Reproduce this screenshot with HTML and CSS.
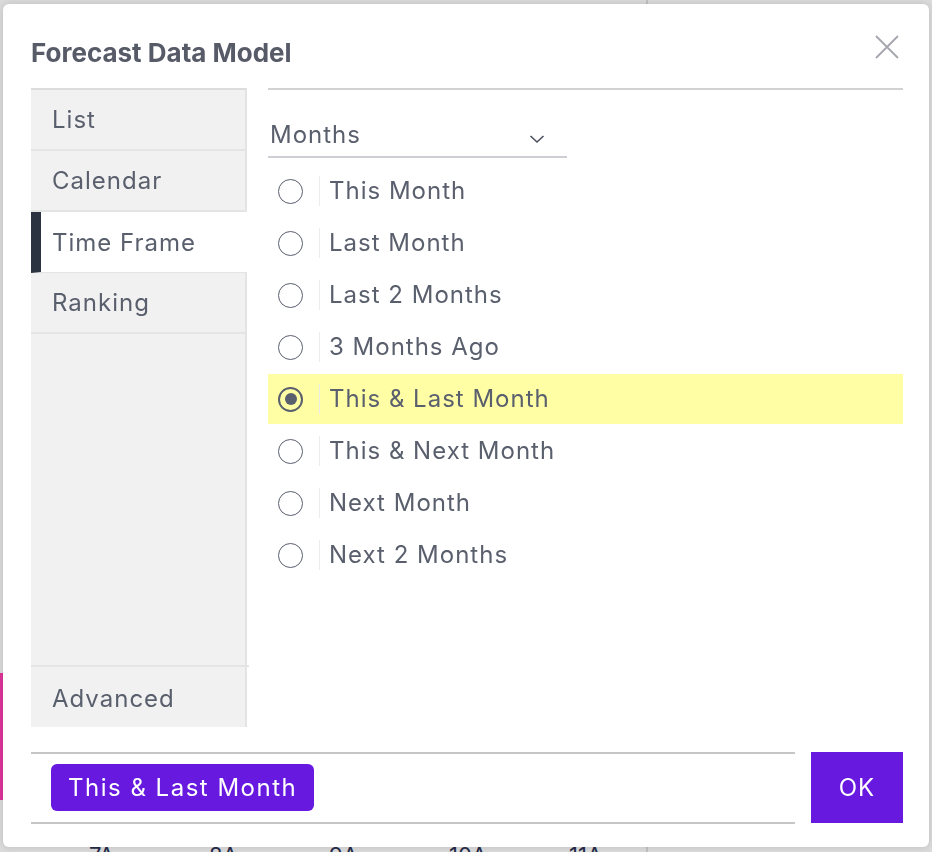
FILE: index.html
```html
<!DOCTYPE html>
<html lang="en">
<head>
  <meta charset="UTF-8">
  <meta name="viewport" content="width=device-width, initial-scale=1.0">
  <title>Forecast Data Model</title>
  <link rel="stylesheet" href="styles.css">
</head>
<body>
  <div class="page">
    <div class="page-accent"></div>
    <div class="page-hours">
      <span>7A</span><span>8A</span><span>9A</span><span>10A</span><span>11A</span>
    </div>
  </div>

  <div class="dialog">
    <div class="dialog-head">
      <h2>Forecast Data Model</h2>
      <button class="close-btn" aria-label="Close">
        <svg width="24" height="24" viewBox="0 0 24 24"><path d="M1 1L23 23M23 1L1 23" stroke="#a5a6ad" stroke-width="1.8" fill="none"/></svg>
      </button>
    </div>

    <div class="dialog-body">
      <nav class="tabs">
        <div class="tab">List</div>
        <div class="tab">Calendar</div>
        <div class="tab active">Time Frame</div>
        <div class="tab">Ranking</div>
        <div class="tab-space"></div>
        <div class="tab last">Advanced</div>
      </nav>

      <section class="panel">
        <div class="select">
          <span>Months</span>
          <svg width="16" height="10" viewBox="0 0 16 10"><path d="M1.5 2L8 8L14.5 2" stroke="#4b5060" stroke-width="1.6" fill="none"/></svg>
        </div>
        <ul class="options">
          <li class="option"><span class="radio"></span><span class="label">This Month</span></li>
          <li class="option"><span class="radio"></span><span class="label">Last Month</span></li>
          <li class="option"><span class="radio"></span><span class="label">Last 2 Months</span></li>
          <li class="option"><span class="radio"></span><span class="label">3 Months Ago</span></li>
          <li class="option selected"><span class="radio"></span><span class="label">This &amp; Last Month</span></li>
          <li class="option"><span class="radio"></span><span class="label">This &amp; Next Month</span></li>
          <li class="option"><span class="radio"></span><span class="label">Next Month</span></li>
          <li class="option"><span class="radio"></span><span class="label">Next 2 Months</span></li>
        </ul>
      </section>
    </div>

    <div class="dialog-foot">
      <div class="summary">
        <span class="chip">This &amp; Last Month</span>
      </div>
      <button class="ok-btn">OK</button>
    </div>
  </div>
</body>
</html>
```

FILE: styles.css
```css
body {
  margin: 0;
  font-family: Inter, "Noto Sans", sans-serif;
  background-color: #dcdcdc;
  height: 852px;
  overflow: hidden;
}

.page {
  height: 852px;
  display: flex;
  flex-direction: column;
  background: linear-gradient(to right, transparent 646px, #c2c2c2 646px, #c2c2c2 648px, transparent 648px);
}

.page-accent {
  flex-shrink: 0;
  width: 3px;
  height: 127px;
  margin-top: 673px;
  background-color: #e0349a;
}

.page-hours {
  flex-shrink: 0;
  display: flex;
  margin-top: 42px;
  padding-left: 89px;
  font-size: 22px;
  color: #262b4a;
}

.page-hours span {
  width: 120px;
}

/* modal */
.dialog {
  position: fixed;
  top: 4px;
  left: 3px;
  width: 926px;
  height: 843px;
  box-sizing: border-box;
  padding: 0 26px 0 28px;
  background-color: #fff;
  border-radius: 6px;
  box-shadow: 0 0 8px rgba(0, 0, 0, 0.15);
  display: flex;
  flex-direction: column;
  color: #5a5f6d;
  letter-spacing: 1px;
}

.dialog-head {
  height: 84px;
  display: flex;
  justify-content: space-between;
  align-items: flex-start;
}

.dialog-head h2 {
  margin: 34px 0 0;
  font-size: 26px;
  font-weight: 700;
  color: #575b68;
  line-height: 30px;
  letter-spacing: 0;
}

.close-btn {
  margin-top: 31px;
  margin-right: 4px;
  padding: 0;
  width: 24px;
  height: 24px;
  border: none;
  background: transparent;
  cursor: pointer;
}

.dialog-body {
  display: flex;
  gap: 21px;
  height: 639px;
}

/* left tabs */
.tabs {
  width: 216px;
  display: flex;
  flex-direction: column;
  background-color: #f1f1f1;
  border-top: 2px solid #dcdcdc;
  box-sizing: border-box;
  border-right: 2px solid #e4e4e4;
}

.tab {
  height: 59px;
  padding-left: 21px;
  display: flex;
  align-items: center;
  font-size: 24px;
  border-bottom: 2px solid #e4e4e4;
}

.tab.active {
  background-color: #fff;
  border-left: 10px solid #2b3240;
  padding-left: 11px;
  margin-right: -2px;
  height: 60px;
  border-bottom-width: 1px;
}

.tab-space {
  flex: 1;
  border-bottom: 2px solid #e4e4e4;
  margin-right: -4px;
}

.tab.last {
  height: 60px;
  border-bottom: none;
  padding-top: 3px;
  box-sizing: border-box;
}

/* right panel */
.panel {
  flex: 1;
  border-top: 2px solid #d2d2d2;
}

.select {
  width: 299px;
  height: 68px;
  box-sizing: border-box;
  padding: 23px 22px 0 2px;
  display: flex;
  justify-content: space-between;
  align-items: center;
  font-size: 24px;
  border-bottom: 2px solid #cdcfd4;
}

.select svg {
  margin-top: 8px;
}

.options {
  list-style: none;
  margin: 8px 0 0;
  padding: 0;
  display: flex;
  flex-direction: column;
  gap: 2px;
}

.option {
  height: 50px;
  display: flex;
  align-items: center;
  font-size: 24px;
}

.option.selected {
  background-color: #fffea5;
}

.radio {
  width: 25px;
  height: 25px;
  box-sizing: border-box;
  margin-left: 10px;
  border: 1.6px solid #5a5f6d;
  border-radius: 50%;
  display: flex;
  align-items: center;
  justify-content: center;
}

.option.selected .radio {
  border-width: 2.5px;
}

.option.selected .radio::after {
  content: "";
  width: 12px;
  height: 12px;
  border-radius: 50%;
  background-color: #5a5f6d;
}

.label {
  margin-left: 16px;
  padding-left: 9px;
  border-left: 1px solid #ececec;
  line-height: 30px;
}

/* footer */
.dialog-foot {
  margin-top: 25px;
  display: flex;
  gap: 16px;
}

.summary {
  flex: 1;
  height: 72px;
  box-sizing: border-box;
  border-top: 2px solid #c6c6c6;
  border-bottom: 2px solid #c6c6c6;
  padding: 10px 20px;
}

.chip {
  display: inline-block;
  height: 47px;
  line-height: 47px;
  padding: 0 17px;
  border-radius: 6px;
  background-color: #6719e0;
  color: #fff;
  font-size: 24px;
  letter-spacing: 1.5px;
}

.ok-btn {
  width: 92px;
  height: 71px;
  border: none;
  background-color: #6719e0;
  color: #fff;
  font-family: Inter, "Noto Sans", sans-serif;
  font-size: 24px;
  letter-spacing: 1px;
  cursor: pointer;
}
```
